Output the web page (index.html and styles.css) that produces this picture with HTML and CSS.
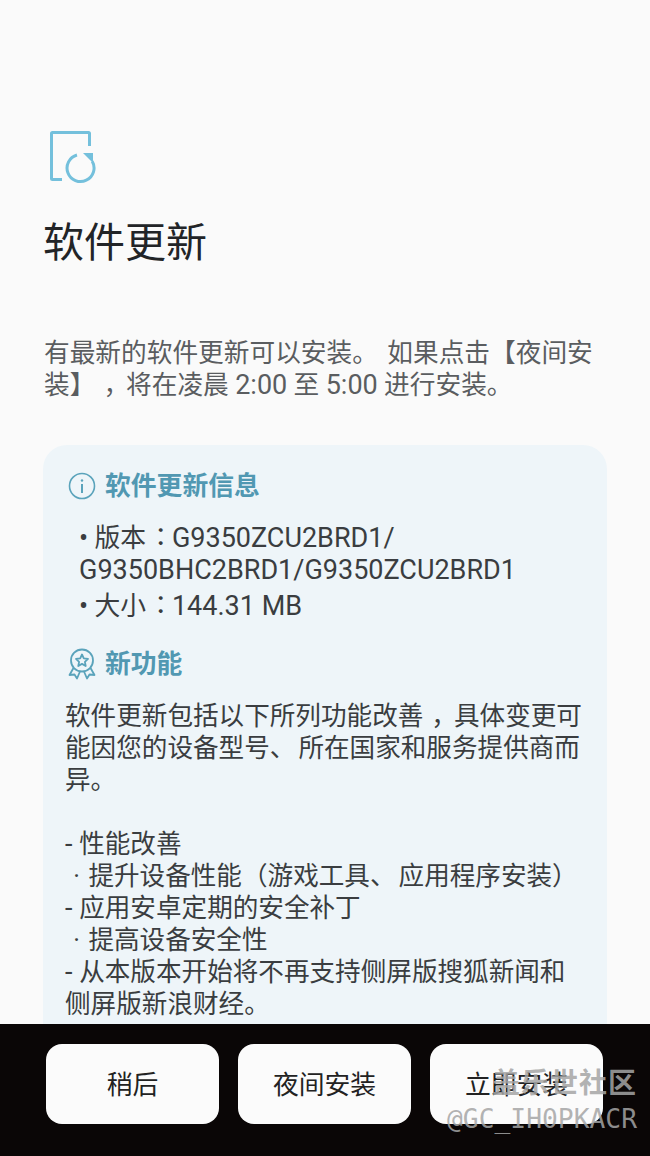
FILE: index.html
```html
<!DOCTYPE html>
<html lang="zh-CN">
<head>
<meta charset="utf-8">
<title>软件更新</title>
<link rel="stylesheet" href="styles.css">
</head>
<body>
<div class="screen">
  <main class="content">
    <svg class="hero-icon" width="48" height="54" viewBox="0 0 48 54" fill="none" stroke="#74c0dc" stroke-width="3">
      <path d="M13 49.500H3.500a1 1 0 0 1-1-1V3.500a1 1 0 0 1 1-1h36a1 1 0 0 1 1 1V16"/>
      <path d="M28 25A13.500 13.500 0 1 0 43.200 31.200"/>
      <path d="M34 23h10v10z" fill="#74c0dc" stroke="none"/>
    </svg>
    <h1 class="title">软件更新</h1>
    <p class="intro">有最新的软件更新可以安装<span class="wide-p">。</span> 如果点击【夜间安装】<span class="fw-comma">，</span>将在凌晨 <span class="lat">2:00</span> 至 <span class="lat">5:00</span> 进行安装。</p>
    <section class="card">
      <h2 class="section-head">
        <svg class="head-icon" width="28" height="28" viewBox="0 0 28 28" fill="none" stroke="#5aa3bb" stroke-width="1.600">
          <circle cx="14" cy="14" r="12.500"/>
          <path d="M14 12v9" stroke-width="2"/>
          <circle cx="14" cy="8.500" r="1.200" fill="#5aa3bb" stroke="none"/>
        </svg>
        软件更新信息
      </h2>
      <ul class="facts">
        <li><span class="lat">•</span> 版本<span class="fw-colon">：</span><span class="lat">G9350ZCU2BRD1/<br>G9350BHC2BRD1/G9350ZCU2BRD1</span></li>
        <li><span class="lat">•</span> 大小<span class="fw-colon">：</span><span class="lat">144.31 MB</span></li>
      </ul>
      <h2 class="section-head section-head-next">
        <svg class="head-icon" width="28" height="32" viewBox="0 0 28 32" fill="none" stroke="#5aa3bb" stroke-width="1.800" stroke-linejoin="round">
          <circle cx="14" cy="12.500" r="11"/>
          <path d="M14 6.500l1.800 3.900 4.200.5-3.100 2.900.8 4.200-3.700-2.100-3.700 2.100.8-4.200-3.100-2.900 4.200-.5z"/>
          <path d="M5.500 20L1.500 27l5-.5 2.500 4 3-7"/>
          <path d="M22.500 20l4 7-5-.5-2.500 4-3-7"/>
        </svg>
        新功能
      </h2>
      <p class="body-text">软件更新包括以下所列功能改善<span class="fw-comma">，</span>具体变更可能因您的设备型号<span class="wide-p">、</span>所在国家和服务提供商而异。</p>
      <p class="body-text notes"><span class="lat">- </span>性能改善<br>
&nbsp;<span class="dot">·</span> 提升设备性能（游戏工具<span class="wide-p">、</span>应用程序安装）<br>
<span class="lat">- </span>应用安卓定期的安全补丁<br>
&nbsp;<span class="dot">·</span> 提高设备安全性<br>
<span class="lat">- </span>从本版本开始将不再支持侧屏版搜狐新闻和<br>
侧屏版新浪财经。</p>
    </section>
  </main>
  <footer class="actions">
    <button class="action" type="button">稍后</button>
    <button class="action" type="button">夜间安装</button>
    <button class="action" type="button">立即安装</button>
  </footer>
  <div class="watermark">
    <div class="wm-name">盖乐世社区</div>
    <div class="wm-id">@GC_IH0PKACR</div>
  </div>
</div>
</body>
</html>
```

FILE: styles.css
```css
* { box-sizing: border-box; }
html, body { margin: 0; padding: 0; }
body {
  width: 650px;
  height: 1156px;
  overflow: hidden;
  font-family: Roboto, "Noto Sans CJK SC", sans-serif;
  color: #2b2d30;
  text-spacing-trim: space-all;
}
.screen {
  position: relative;
  width: 650px;
  height: 1156px;
  display: flex;
  flex-direction: column;
  background: #fafafa;
}
.content {
  flex: 1;
  min-height: 0;
  overflow: hidden;
  padding: 130px 43px 0;
}
.hero-icon { display: block; margin-left: 6px; }
.title {
  margin: 31px 0 0 0;
  font-size: 41px;
  font-weight: 400;
  line-height: 56px;
  color: #222427;
}
.intro {
  margin: 66px 0 0 1px;
  font-size: 25.700px;
  line-height: 32px;
  color: #5a5d60;
}
.lat { font-size: 27px; line-height: 1; }
.wide-p { margin-right: 3px; }
.fw-comma {
  display: inline-block;
  line-height: 1;
  margin-right: 5px;
  transform: translateX(8px);
}
.fw-colon { display: inline-block; line-height: 1; transform: translate(8px, -2px); }
.dot { margin: 0 2px; }
.card {
  margin-top: 44px;
  padding: 23px 16px 40px 22px;
  background: #eef5f9;
  border-radius: 24px 24px 0 0;
}
.section-head {
  display: flex;
  align-items: center;
  gap: 9px;
  margin: 0 0 0 3px;
  font-size: 25.800px;
  font-weight: 700;
  line-height: 36px;
  color: #5198b2;
}
.section-head-next { margin-top: 24px; }
.head-icon { flex: none; }
.facts {
  list-style: none;
  margin: 18px 0 0;
  padding: 0 0 0 14px;
  font-size: 25.800px;
  line-height: 32px;
  color: #3a3d40;
}
.facts li + li { margin-top: 4px; }
.body-text {
  margin: 18px 0 0;
  font-size: 25.600px;
  line-height: 32px;
  color: #3a3d40;
}
.notes { margin-top: 32px; }
.actions {
  flex: none;
  height: 132px;
  display: flex;
  gap: 19px;
  padding: 20px 46px 32px;
  background: #0a0606;
}
.action {
  width: 173px;
  height: 80px;
  padding: 0 0 4px;
  border: 0;
  border-radius: 16px;
  background: #fbfbfb;
  font: 400 25.800px Roboto, "Noto Sans CJK SC", sans-serif;
  color: #222;
}
.watermark {
  position: absolute;
  right: 13px;
  bottom: 22px;
  text-align: right;
  color: rgba(165, 165, 165, 0.85);
}
.wm-name {
  font: 700 28px/34px "Noto Sans CJK SC", sans-serif;
  letter-spacing: 1px;
}
.wm-id {
  font: 400 26.300px/30px "DejaVu Sans Mono", monospace;
  margin-top: 6px;
}
```
